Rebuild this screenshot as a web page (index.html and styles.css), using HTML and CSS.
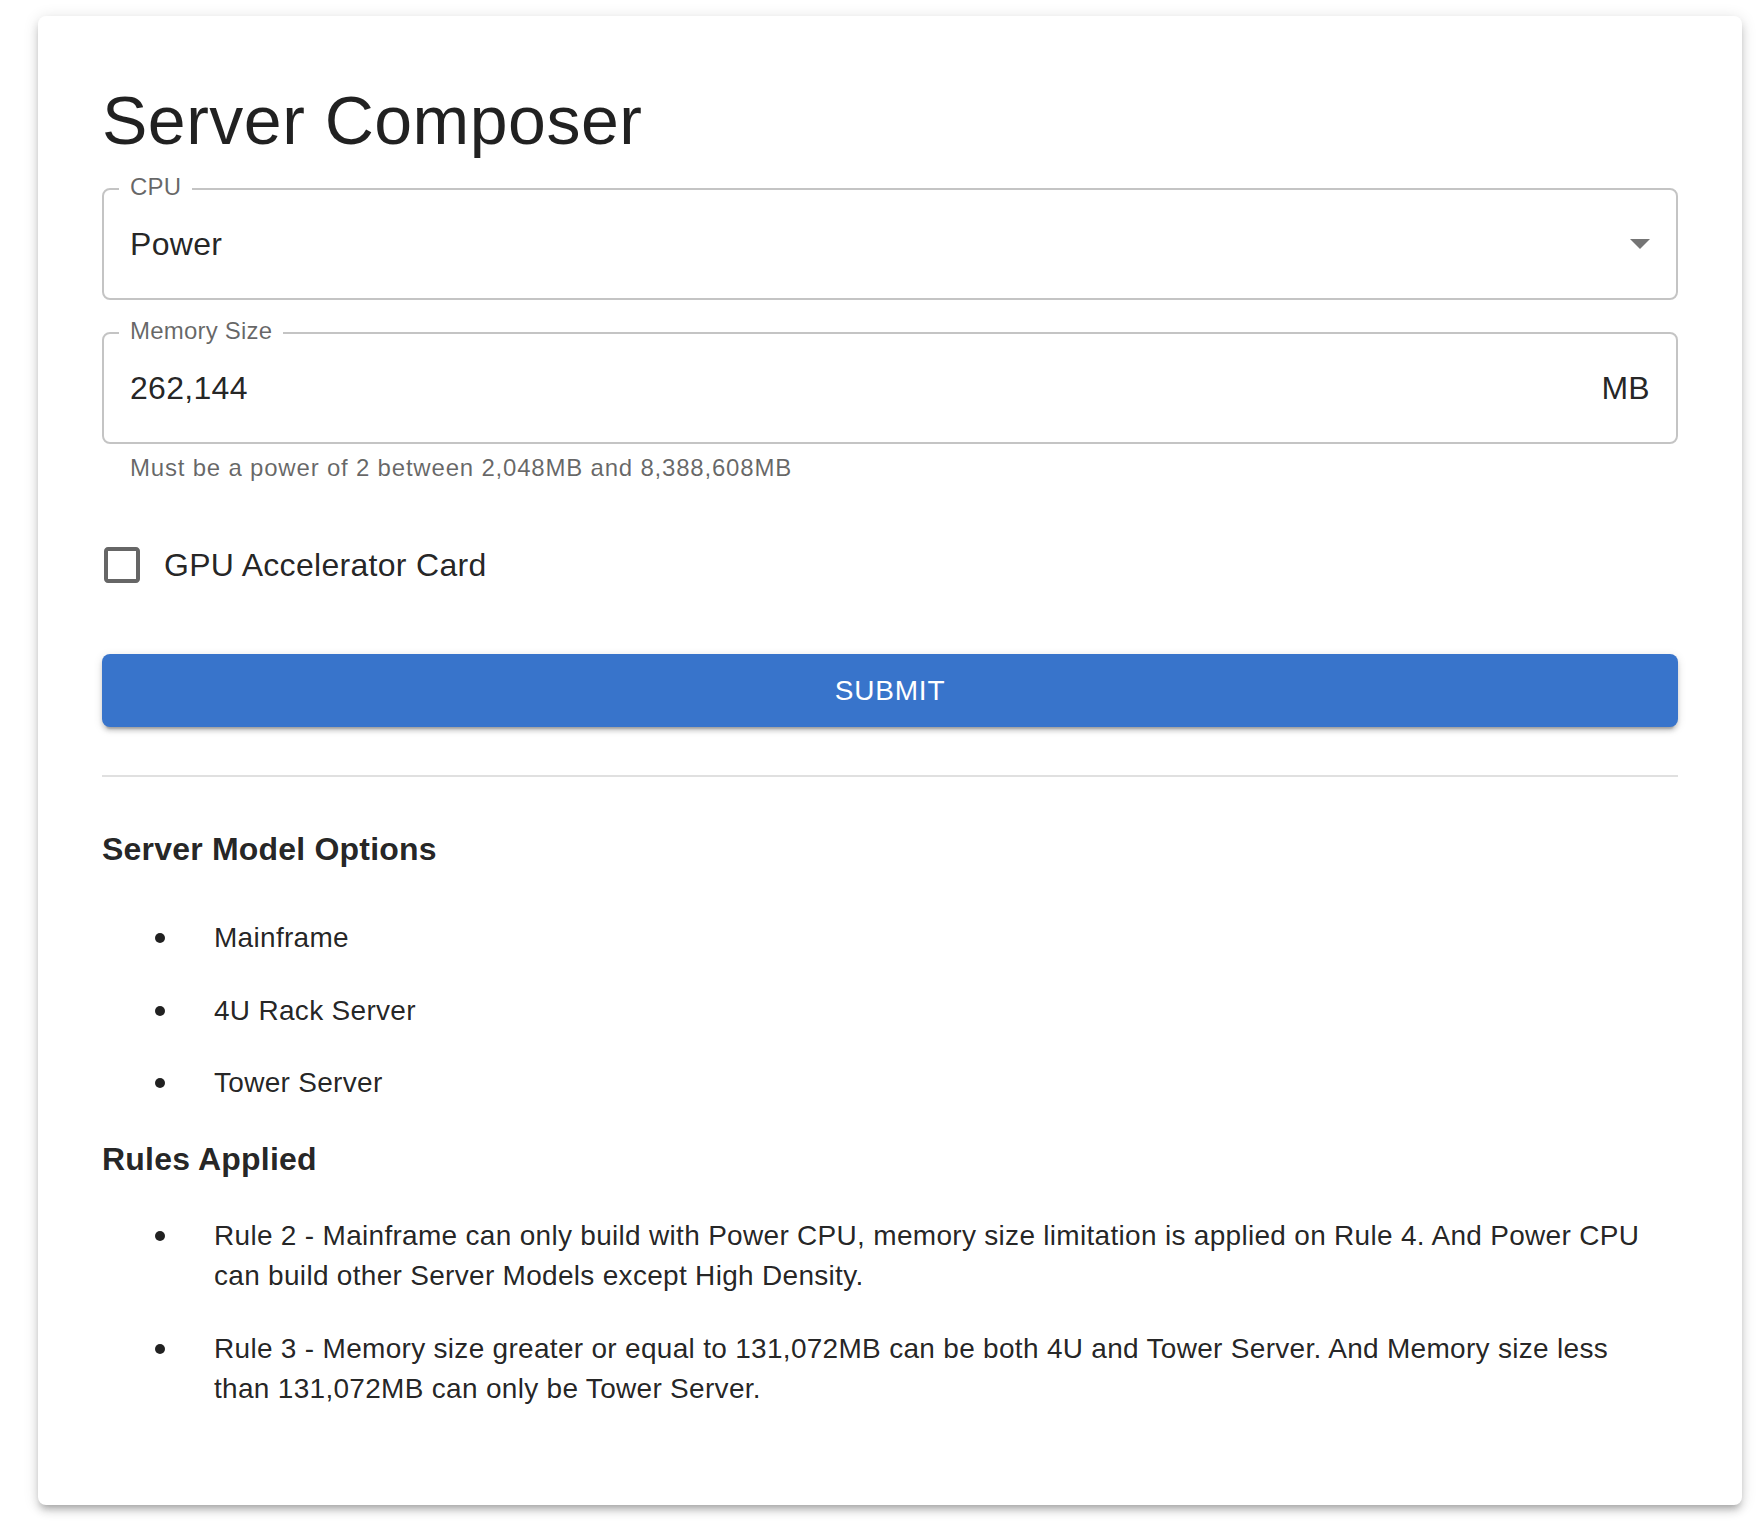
FILE: index.html
```html
<!DOCTYPE html>
<html lang="en">
<head>
<meta charset="utf-8">
<title>Server Composer</title>
<link rel="stylesheet" href="styles.css">
</head>
<body>
<div class="page">
  <div class="card">
    <h1 class="title">Server Composer</h1>

    <div class="field field-cpu">
      <div class="outline">
        <span class="float-label">CPU</span>
        <span class="value">Power</span>
        <svg class="arrow" width="20" height="10" viewBox="0 0 20 10"><path d="M0 0L10 10L20 0Z"/></svg>
      </div>
    </div>

    <div class="field field-mem">
      <div class="outline">
        <span class="float-label">Memory Size</span>
        <span class="value">262,144</span>
        <span class="adorn">MB</span>
      </div>
      <p class="helper">Must be a power of 2 between 2,048MB and 8,388,608MB</p>
    </div>

    <label class="check">
      <span class="check-root">
        <svg width="48" height="48" viewBox="0 0 24 24"><path d="M19 5v14H5V5h14m0-2H5c-1.1 0-2 .9-2 2v14c0 1.1.9 2 2 2h14c1.1 0 2-.9 2-2V5c0-1.1-.9-2-2-2z"/></svg>
      </span>
      <span class="check-label">GPU Accelerator Card</span>
    </label>

    <button class="submit" type="button">Submit</button>

    <hr class="divider">

    <h2 class="section">Server Model Options</h2>
    <ul class="list">
      <li class="item"><span class="dot"></span><span class="item-text">Mainframe</span></li>
      <li class="item"><span class="dot"></span><span class="item-text">4U Rack Server</span></li>
      <li class="item"><span class="dot"></span><span class="item-text">Tower Server</span></li>
    </ul>

    <h2 class="section section-rules">Rules Applied</h2>
    <ul class="list list-rules">
      <li class="item"><span class="dot"></span><span class="item-text">Rule 2 - Mainframe can only build with Power CPU, memory size limitation is applied on Rule 4. And Power CPU can build other Server Models except High Density.</span></li>
      <li class="item"><span class="dot"></span><span class="item-text">Rule 3 - Memory size greater or equal to 131,072MB can be both 4U and Tower Server. And Memory size less than 131,072MB can only be Tower Server.</span></li>
    </ul>
  </div>
</div>
</body>
</html>
```

FILE: styles.css
```css
* { box-sizing: border-box; }

html, body {
  margin: 0;
  padding: 0;
  background: #ffffff;
}

body {
  font-family: "Liberation Sans", Arial, Helvetica, sans-serif;
  color: rgba(0, 0, 0, 0.87);
}

.page {
  padding: 16px 20px 23px 38px;
}

.card {
  background: #ffffff;
  border-radius: 8px;
  box-shadow: 0 6px 6px -4px rgba(0, 0, 0, 0.2), 0 6px 8px 0 rgba(0, 0, 0, 0.14), 0 2px 16px 0 rgba(0, 0, 0, 0.12);
  padding: 62px 64px 80px 64px;
}

.title {
  margin: 0;
  font-size: 68px;
  line-height: 84px;
  font-weight: 400;
  letter-spacing: 0.5px;
}

.field { display: block; }
.field-cpu { margin-top: 26px; }
.field-mem { margin-top: 32px; }

.outline {
  position: relative;
  height: 112px;
  border: 2px solid rgba(0, 0, 0, 0.23);
  border-radius: 8px;
  display: flex;
  align-items: center;
  padding: 0 26px;
  font-size: 32px;
  line-height: 46px;
  letter-spacing: 0.3px;
}

.float-label {
  position: absolute;
  left: 15px;
  top: -15px;
  padding: 0 11px;
  background: #ffffff;
  font-size: 24px;
  line-height: 24px;
  color: rgba(0, 0, 0, 0.6);
  letter-spacing: 0.2px;
}

.value { flex: 1; }

.arrow { display: block; fill: rgba(0, 0, 0, 0.54); }

.adorn { color: rgba(0, 0, 0, 0.87); }

.helper {
  margin: 4px 28px 0 28px;
  font-size: 24px;
  line-height: 40px;
  letter-spacing: 0.8px;
  color: rgba(0, 0, 0, 0.6);
}

.check {
  display: flex;
  align-items: center;
  margin-top: 35px;
}

.check-root {
  margin-left: -22px;
  padding: 18px;
  display: flex;
}

.check-root svg { display: block; fill: rgba(0, 0, 0, 0.6); }

.check-label {
  font-size: 32px;
  line-height: 48px;
  letter-spacing: 0.3px;
}

.submit {
  display: block;
  width: 100%;
  height: 73px;
  margin-top: 47px;
  border: 0;
  border-radius: 8px;
  background: #3874cb;
  color: #ffffff;
  font-family: "Liberation Sans", Arial, Helvetica, sans-serif;
  font-size: 28px;
  letter-spacing: 0.8px;
  text-transform: uppercase;
  box-shadow: 0 6px 2px -4px rgba(0, 0, 0, 0.2), 0 4px 4px 0 rgba(0, 0, 0, 0.14), 0 2px 10px 0 rgba(0, 0, 0, 0.12);
}

.divider {
  margin: 48px 0 0 0;
  border: 0;
  height: 2px;
  background: #e0e0e0;
}

.section {
  margin: 48px 0 0 0;
  font-size: 32px;
  line-height: 48px;
  font-weight: 700;
  letter-spacing: 0.2px;
}

.section-rules { margin-top: 15px; }

.list {
  list-style: none;
  margin: 29px 0 0 0;
  padding: 0;
}

.list-rules { margin-top: 17px; }

.item {
  display: flex;
  align-items: flex-start;
  padding: 16.3px 32px 16.3px 0;
  font-size: 28px;
  line-height: 40px;
  letter-spacing: 0.3px;
}

.dot {
  flex: none;
  width: 10px;
  height: 10px;
  border-radius: 50%;
  background: rgba(0, 0, 0, 0.87);
  margin: 15px 49px 0 53px;
}

.item-text { flex: 1; }
```
